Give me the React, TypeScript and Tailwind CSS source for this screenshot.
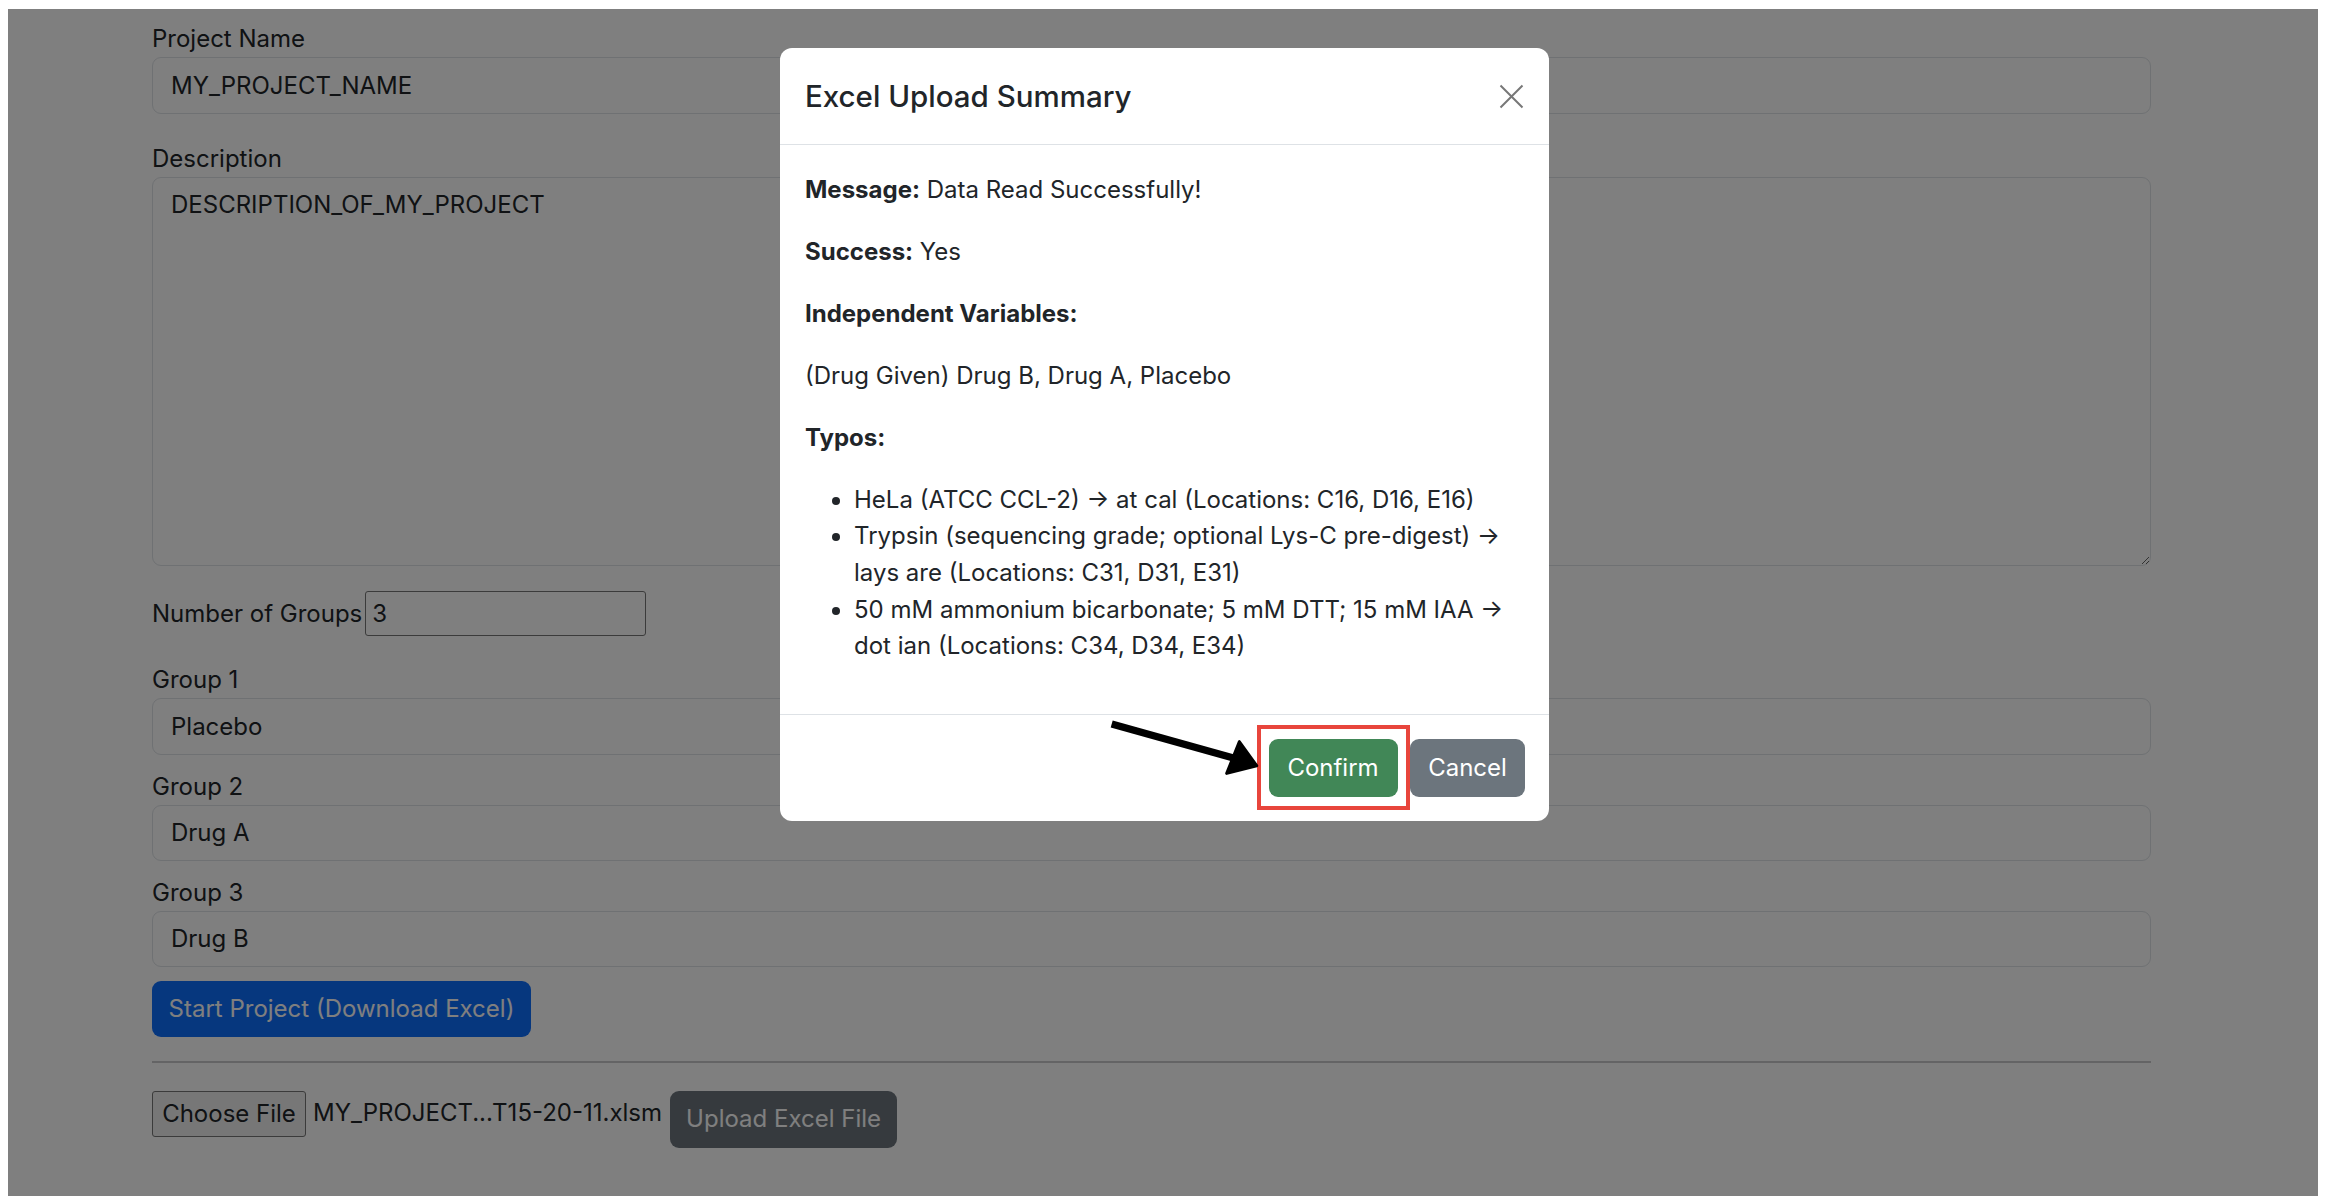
import React from 'react';

const inputCls =
  'block w-full h-[56.5px] rounded-[9px] border-[1.5px] border-[#dee2e6] bg-white px-[18px] text-[24px] leading-[36px] text-[#212529] outline-none';

function Field({ label, value, className = '' }: { label: string; value: string; className?: string }) {
  return (
    <div className={className}>
      <label className="block h-[36px] text-[24px] leading-[36px]">{label}</label>
      <input className={inputCls} value={value} readOnly />
    </div>
  );
}

function UploadSummaryModal() {
  return (
    <div className="absolute left-[772px] top-[39px] w-[769px] rounded-[12px] bg-white text-[#212529]">
      <div className="flex h-[97px] items-center justify-between border-b border-[#dee2e6] px-[25px]">
        <h5 className="text-[29.5px] font-medium leading-[44px]">Excel Upload Summary</h5>
        <svg width="25" height="25" viewBox="0 0 25 25" className="block">
          <path d="M1.5 1.5 L23.5 23.5 M23.5 1.5 L1.5 23.5" stroke="#777777" strokeWidth="2" fill="none" />
        </svg>
      </div>

      <div className="px-[25px] pb-[24px] pt-[26.5px] text-[24px] leading-[36.7px]">
        <p className="mb-[25.3px]">
          <strong className="font-bold">Message:</strong> Data Read Successfully!
        </p>
        <p className="mb-[25.3px]">
          <strong className="font-bold">Success:</strong> Yes
        </p>
        <p className="mb-[25.3px]">
          <strong className="font-bold">Independent Variables:</strong>
        </p>
        <p className="mb-[25.3px]">(Drug Given) Drug B, Drug A, Placebo</p>
        <p className="mb-[25.3px]">
          <strong className="font-bold">Typos:</strong>
        </p>
        <ul className="mb-[24.5px] list-disc whitespace-nowrap pl-[49px]">
          <li>HeLa (ATCC CCL-2) → at cal (Locations: C16, D16, E16)</li>
          <li>
            Trypsin (sequencing grade; optional Lys-C pre-digest) →
            <br />
            lays are (Locations: C31, D31, E31)
          </li>
          <li>
            50 mM ammonium bicarbonate; 5 mM DTT; 15 mM IAA →
            <br />
            dot ian (Locations: C34, D34, E34)
          </li>
        </ul>
      </div>

      <div className="flex justify-end gap-[12.5px] border-t border-[#dee2e6] pb-[24px] pr-[24px] pt-[24.5px]">
        <button className="h-[57.5px] w-[129px] rounded-[9px] bg-[#418757] text-[24px] text-white">Confirm</button>
        <button className="h-[57.5px] w-[115px] rounded-[9px] bg-[#6c757d] text-[24px] text-white">Cancel</button>
      </div>

      {/* annotation: red highlight + arrow */}
      <div className="absolute left-[476.7px] top-[677px] h-[85.4px] w-[153.3px] border-4 border-[#e8453c]" />
      <svg width="170" height="75" viewBox="0 0 170 75" className="absolute left-[320px] top-[661px]">
        <line x1="11.7" y1="15" x2="137" y2="50" stroke="#000" strokeWidth="7.5" />
        <polygon
          points="156.7,56.7 139.3,32.7 126.7,64.4"
          fill="#000"
          stroke="#000"
          strokeWidth="3"
          strokeLinejoin="round"
        />
      </svg>
    </div>
  );
}

export default function App() {
  return (
    <div className="h-[1204px] w-[2328px] bg-white pl-[8px] pt-[9px] font-[Inter,sans-serif] text-[#212529]">
      <div className="relative h-[1187px] w-[2310px] overflow-hidden bg-white">
        <div className="ml-[144px] flex w-[1999px] flex-col pt-[12px] text-[24px] leading-[36px]">
          <Field label="Project Name" value="MY_PROJECT_NAME" />

          <div className="mt-[27px]">
            <label className="block h-[36px]">Description</label>
            <textarea
              className="block h-[389px] w-full rounded-[9px] border-[1.5px] border-[#dee2e6] bg-white px-[18px] py-[9px] text-[24px] leading-[36px] outline-none"
              value="DESCRIPTION_OF_MY_PROJECT"
              readOnly
            />
          </div>

          <div className="mt-[25.5px] flex h-[45px] items-center">
            <label>Number of Groups</label>
            <input
              className="ml-[3px] h-[45px] w-[281px] rounded-[3px] border-[1.5px] border-[#767676] bg-white pl-[6px] text-[24px] outline-none"
              value="3"
              readOnly
            />
          </div>

          <Field className="mt-[26px]" label="Group 1" value="Placebo" />
          <Field className="mt-[14px]" label="Group 2" value="Drug A" />
          <Field className="mt-[13.5px]" label="Group 3" value="Drug B" />

          <div className="mt-[14px]">
            <button className="h-[56px] w-[379px] rounded-[9px] bg-[#0d6efd] text-[24px] text-white">
              Start Project (Download Excel)
            </button>
          </div>

          <hr className="mt-[24px] border-t-2 border-[#c8c9ca]" />

          <div className="mt-[27.5px] flex items-start">
            <button className="mt-[0.7px] h-[45.5px] w-[154px] rounded-[3px] border-[1.5px] border-[#767676] bg-[#efefef] text-[24px]">
              Choose File
            </button>
            <span className="ml-[7px] mt-[4.5px]">MY_PROJECT...T15-20-11.xlsm</span>
            <button className="ml-[8px] h-[57.5px] w-[227px] rounded-[9px] bg-[#6c757d] text-[24px] text-white">
              Upload Excel File
            </button>
          </div>
        </div>

        <div className="absolute inset-0 bg-black/50" />
        <UploadSummaryModal />
      </div>
    </div>
  );
}
